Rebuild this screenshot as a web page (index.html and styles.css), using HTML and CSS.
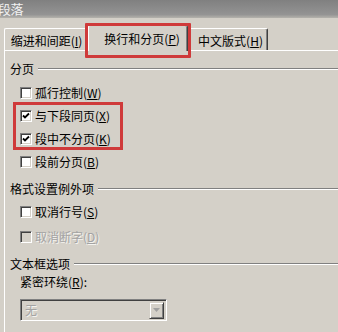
FILE: index.html
```html
<!DOCTYPE html>
<html lang="zh">
<head>
<meta charset="utf-8">
<link rel="stylesheet" href="styles.css">
</head>
<body>
<div class="title">段落</div>
<div class="tabs">
  <div class="tab first">缩进和间距(<u>I</u>)</div>
  <div class="tab active">换行和分页(<u>P</u>)</div>
  <div class="tab last">中文版式(<u>H</u>)</div>
</div>
<div class="panel">
  <div class="legend"><span>分页</span><i class="rule"></i></div>
  <div class="rows">
    <label class="check"><span class="box"></span>孤行控制(<u>W</u>)</label>
    <div class="hl">
      <label class="check"><span class="box"><svg viewBox="0 0 10 10"><polyline points="2,4.5 4,6.5 8,2.5"/></svg></span>与下段同页(<u>X</u>)</label>
      <label class="check"><span class="box"><svg viewBox="0 0 10 10"><polyline points="2,4.5 4,6.5 8,2.5"/></svg></span>段中不分页(<u>K</u>)</label>
    </div>
    <label class="check"><span class="box"></span>段前分页(<u>B</u>)</label>
  </div>
  <div class="legend l2"><span>格式设置例外项</span><i class="rule"></i></div>
  <div class="rows r2">
    <label class="check"><span class="box"></span>取消行号(<u>S</u>)</label>
    <label class="check disabled"><span class="box"></span>取消断字(<u>D</u>)</label>
  </div>
  <div class="legend l3"><span>文本框选项</span><i class="rule"></i></div>
  <div class="field">紧密环绕(<u>R</u>):</div>
  <div class="select">
    <span class="val">无</span>
    <span class="btn"><svg viewBox="0 0 7 4"><polygon points="0,0 7,0 3.5,4"/></svg></span>
  </div>
</div>
</body>
</html>
```
FILE: styles.css
```css
html, body {
  margin: 0;
  padding: 0;
  background: #d4d0c8;
  overflow: hidden;
}
body {
  width: 338px;
  height: 332px;
  font-family: "Noto Sans CJK SC", "Noto Sans", sans-serif;
  font-size: 12px;
  line-height: 16px;
  color: #000;
}
u { text-decoration: underline; text-underline-offset: 1px; }

.title {
  height: 18px;
  background: linear-gradient(#808080, #939393 80%, #b4b2ac);
  color: #f2f2f2;
  font-size: 13px;
  line-height: 18px;
  padding-left: 0;
  text-indent: -2px;
  letter-spacing: -0.5px;
}

.tabs {
  display: flex;
  align-items: flex-end;
  height: 32px;
  padding-left: 4px;
}
.tab {
  box-sizing: border-box;
  height: 22px;
  border-top: 1px solid #fff;
  border-left: 1px solid #fff;
  border-radius: 2px 2px 0 0;
  display: flex;
  align-items: center;
  justify-content: center;
  padding-top: 3px;
  white-space: nowrap;
}
.tab.first { width: 84px; }
.tab.active {
  width: 100px;
  height: 26px;
  margin-bottom: -1px;
  padding-top: 1px;
  padding-left: 8px;
  border-right: 1px solid #404040;
  box-shadow: inset -1px 0 0 #808080;
  background: #d4d0c8;
  position: relative;
  z-index: 2;
}
.tab.active::after {
  content: "";
  position: absolute;
  left: -4px;
  right: -4px;
  top: -3px;
  bottom: -7px;
  border: 3px solid #cf3a3a;
  border-radius: 1px;
}
.tab.last {
  width: 80px;
  padding-left: 6px;
  border-left: none;
  border-right: 1px solid #404040;
  box-shadow: inset -1px 0 0 #808080;
}

.panel {
  box-sizing: border-box;
  margin-left: 4px;
  border-top: 1px solid #fff;
  border-left: 1px solid #fff;
  height: 282px;
  padding-left: 5px;
  padding-top: 10px;
}

.legend {
  display: flex;
  align-items: center;
  height: 16px;
  gap: 4px;
}
.legend span { white-space: nowrap; }
.rule {
  flex: 1;
  height: 0;
  border-top: 1px solid #808080;
  border-bottom: 1px solid #fff;
}
.l2 { margin-top: 8px; }
.l3 { margin-top: 7px; }

.rows {
  margin-left: 10px;
  margin-top: 4px;
}
.r2 { margin-top: 2px; }
.check {
  display: flex;
  align-items: center;
  height: 23px;
}
.r2 .check { height: 25px; }
.box {
  box-sizing: border-box;
  width: 12px;
  height: 12px;
  margin-right: 3px;
  background: #fff;
  border: 1px solid;
  border-color: #808080 #fff #fff #808080;
  box-shadow: inset 1px 1px 0 #404040, inset -1px -1px 0 #d4d0c8;
  display: flex;
  align-items: center;
  justify-content: center;
}
.box svg {
  width: 10px;
  height: 10px;
  fill: none;
  stroke: #000;
  stroke-width: 1.8;
}
.hl { position: relative; }
.hl::after {
  content: "";
  position: absolute;
  left: -7px;
  width: 110px;
  top: -2px;
  bottom: 0;
  box-sizing: border-box;
  border: 3px solid #cf3a3a;
}
.disabled { color: #a3a3a3; text-shadow: 1px 1px 0 #f4f3ef; }
.disabled .box { background: #d4d0c8; }

.field {
  margin-left: 10px;
  margin-top: 2px;
  height: 16px;
}
.select {
  box-sizing: border-box;
  margin-left: 10px;
  margin-top: 9px;
  width: 147px;
  height: 22px;
  border: 1px solid;
  border-color: #808080 #fff #fff #808080;
  box-shadow: inset 1px 1px 0 #404040, inset -1px -1px 0 #d4d0c8;
  display: flex;
  align-items: center;
  justify-content: space-between;
  padding: 0 2px 0 4px;
}
.val { color: #a3a3a3; text-shadow: 1px 1px 0 #f4f3ef; }
.btn {
  box-sizing: border-box;
  width: 15px;
  height: 17px;
  background: #d4d0c8;
  border: 1px solid;
  border-color: #d4d0c8 #404040 #404040 #d4d0c8;
  box-shadow: inset 1px 1px 0 #fff, inset -1px -1px 0 #808080;
  display: flex;
  align-items: center;
  justify-content: center;
}
.btn svg { width: 7px; height: 4px; fill: #a0a0a0; }
```
